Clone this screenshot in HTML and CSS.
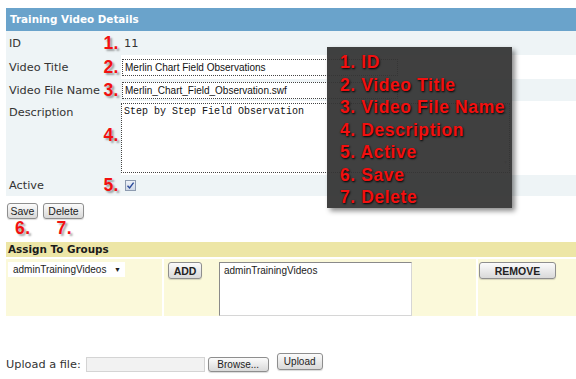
FILE: index.html
```html
<!DOCTYPE html>
<html lang="en">
<head>
  <meta charset="UTF-8">
  <title>Training Video Details</title>
  <link rel="stylesheet" href="styles.css">
</head>
<body>
  <div class="page">

    <div class="details">
      <div class="title-bar">Training Video Details</div>

      <div class="row row-id">
        <div class="label">ID <span class="num">1.</span></div>
        <div class="value value-text">11</div>
      </div>

      <div class="row row-title alt">
        <div class="label">Video Title <span class="num">2.</span></div>
        <div class="value"><div class="field field-title">Merlin Chart Field Observations</div></div>
      </div>

      <div class="row row-file">
        <div class="label">Video File Name <span class="num">3.</span></div>
        <div class="value"><div class="field field-file">Merlin_Chart_Field_Observation.swf</div></div>
      </div>

      <div class="row row-desc alt">
        <div class="label label-top">Description <span class="num">4.</span></div>
        <div class="value">
          <div class="field field-desc">Step by Step Field Observation
            <span class="scroll-up">&#9650;</span>
            <span class="scroll-down">&#9660;</span>
          </div>
        </div>
      </div>

      <div class="row row-active">
        <div class="label">Active <span class="num">5.</span></div>
        <div class="value">
          <span class="checkbox">
            <svg width="9" height="9" viewBox="0 0 9 9"><path d="M1.5 4.8 L3.6 7 L7.6 1.6" fill="none" stroke="#2a4a9a" stroke-width="1.4"/></svg>
          </span>
        </div>
      </div>
    </div>

    <div class="actions">
      <button class="btn btn-save">Save</button>
      <button class="btn btn-delete">Delete</button>
    </div>
    <div class="action-nums">
      <span class="num num-save">6.</span>
      <span class="num num-delete">7.</span>
    </div>

    <div class="groups">
      <div class="groups-head">Assign To Groups</div>
      <div class="groups-row">
        <div class="cell cell-select">
          <div class="select">adminTrainingVideos <span class="arrow">&#9660;</span></div>
        </div>
        <div class="cell cell-mid">
          <button class="btn btn-bold btn-add">ADD</button>
          <div class="listbox">adminTrainingVideos</div>
        </div>
        <div class="cell cell-remove">
          <button class="btn btn-bold btn-remove">REMOVE</button>
        </div>
      </div>
    </div>

    <div class="upload">
      <span class="upload-label">Upload a file:</span>
      <span class="file-input"></span>
      <button class="btn btn-browse">Browse...</button>
      <button class="btn btn-upload">Upload</button>
    </div>

    <div class="callout">
      <div>1. ID</div>
      <div>2. Video Title</div>
      <div>3. Video File Name</div>
      <div>4. Description</div>
      <div>5. Active</div>
      <div>6. Save</div>
      <div>7. Delete</div>
    </div>

  </div>
</body>
</html>
```

FILE: styles.css
```css
:root {
  --blue: #6aa3cb;
  --light: #eef4f6;
  --khaki: #ede6a6;
  --cream: #fbf9da;
  --red: #f21010;
  --text: #333;
}

body {
  margin: 0;
  font-family: 'DejaVu Sans', Verdana, sans-serif;
  font-size: 11.3px;
  color: var(--text);
  background: #fff;
  overflow: hidden;
}

.page {
  position: relative;
  padding: 8px 0 0 6px;
  height: 371px;
}

/* details table */

.title-bar {
  height: 23px;
  line-height: 23px;
  padding-left: 4px;
  background-color: var(--blue);
  color: #fff;
  font-weight: bold;
  font-size: 10.4px;
}

.row {
  display: grid;
  grid-template-columns: 115px 1fr;
}

.row-id { height: 24px; }
.row-title { height: 24px; }
.row-file { height: 22px; }
.row-desc { height: 74px; }
.row-active { height: 21px; }

.label {
  display: flex;
  align-items: center;
  justify-content: space-between;
  padding: 0 2px 0 3px;
  background-color: var(--light);
}

.label-top {
  align-items: flex-start;
  padding-top: 5px;
}

.label-top .num {
  margin-top: 19px;
}

.value {
  display: flex;
  align-items: center;
  background-color: var(--light);
}

.row.alt .value {
  background-color: #fff;
}

.value-text {
  padding-left: 3px;
}

.num {
  font-family: 'Liberation Sans', Arial, sans-serif;
  font-weight: bold;
  font-size: 17.5px;
  letter-spacing: 0.5px;
  color: var(--red);
  text-shadow: 2px 2px 2px rgba(0, 0, 0, 0.35);
}

.field {
  box-sizing: border-box;
  border: 1px dotted #444;
  background: #fff;
  font-family: 'Liberation Sans', Arial, sans-serif;
  font-size: 10px;
  color: #111;
  padding-left: 2px;
}

.field-title,
.field-file {
  width: 276px;
  height: 17px;
  line-height: 15px;
  margin-left: 1px;
}

.field-desc {
  position: relative;
  width: 389px;
  height: 70px;
  font-family: 'Liberation Mono', 'Courier New', monospace;
  font-size: 10px;
  padding-top: 2px;
  line-height: 12px;
}

.scroll-up,
.scroll-down {
  position: absolute;
  right: 2px;
  font-size: 5px;
  color: #bbb;
}

.scroll-up { top: 3px; }
.scroll-down { bottom: 3px; }

.checkbox {
  display: flex;
  align-items: center;
  justify-content: center;
  width: 9px;
  height: 9px;
  margin-left: 4px;
  border: 1px solid #8d9bb0;
  background: linear-gradient(#eef2f8, #cfd8e6);
}

/* buttons */

.btn {
  box-sizing: border-box;
  padding: 0;
  border: 1px solid #8e8e8e;
  border-radius: 3px;
  background: linear-gradient(#fbfbfb, #d9d9d9);
  font-family: 'Liberation Sans', Arial, sans-serif;
  font-size: 10.5px;
  color: #222;
  box-shadow: 0 1px 1px rgba(0, 0, 0, 0.15);
}

.btn-bold {
  font-weight: bold;
  font-size: 10.5px;
}

.actions {
  display: flex;
  gap: 5px;
  margin: 7px 0 0 1px;
}

.btn-save { width: 31px; height: 16px; }
.btn-delete { width: 41px; height: 16px; }

.action-nums {
  display: flex;
  height: 20px;
  padding-left: 9px;
}

.action-nums .num {
  line-height: 19px;
}

.num-delete {
  margin-left: 26px;
}

/* groups */

.groups {
  margin-top: 3px;
}

.groups-head {
  height: 15px;
  line-height: 15px;
  padding-left: 2px;
  background-color: var(--khaki);
  color: #1a1a1a;
  font-weight: bold;
  font-size: 10.4px;
}

.groups-row {
  display: grid;
  grid-template-columns: 156px 312px 1fr;
  gap: 2px;
  margin-top: 2px;
  height: 57px;
}

.cell {
  background-color: var(--cream);
  padding-top: 3px;
}

.cell-select {
  padding-left: 2px;
}

.select {
  display: flex;
  justify-content: space-between;
  align-items: center;
  box-sizing: border-box;
  width: 117px;
  height: 15px;
  padding: 0 4px 0 5px;
  background: #fff;
  font-family: 'Liberation Sans', Arial, sans-serif;
  font-size: 10px;
  color: #222;
}

.arrow {
  font-size: 7px;
}

.cell-mid {
  display: flex;
  align-items: flex-start;
}

.btn-add {
  width: 34px;
  height: 17px;
  margin-left: 4px;
}

.listbox {
  box-sizing: border-box;
  width: 193px;
  height: 54px;
  margin-left: 17px;
  padding: 2px 4px;
  background: #fff;
  border: 1px solid #d6d6d6;
  border-top-color: #8a8a8a;
  border-left-color: #8a8a8a;
  font-family: 'Liberation Sans', Arial, sans-serif;
  font-size: 10px;
  color: #222;
}

.cell-remove {
  padding-left: 1px;
}

.btn-remove {
  width: 77px;
  height: 17px;
}

/* upload */

.upload {
  display: flex;
  align-items: flex-start;
  margin-top: 37px;
}

.upload-label {
  margin-top: 4px;
  line-height: 15px;
}

.file-input {
  box-sizing: border-box;
  width: 119px;
  height: 15px;
  margin: 4px 0 0 5px;
  background: #f2f2f2;
  border: 1px solid #d4d4d4;
}

.btn-browse {
  width: 61px;
  height: 15px;
  margin: 4px 0 0 3px;
  font-size: 10px;
}

.btn-upload {
  width: 46px;
  height: 17px;
  margin-left: 8px;
  font-size: 10px;
}

/* annotation callout */

.callout {
  position: absolute;
  left: 327px;
  top: 47px;
  box-sizing: border-box;
  width: 185px;
  height: 161px;
  padding: 4px 0 0 13px;
  background: rgba(52, 52, 52, 0.94);
  box-shadow: 3px 3px 5px rgba(0, 0, 0, 0.45);
  font-family: 'Liberation Sans', Arial, sans-serif;
  font-weight: bold;
  font-size: 17.5px;
  letter-spacing: 0.6px;
  line-height: 22.5px;
  color: var(--red);
  text-shadow: 1px 1px 2px #000;
  white-space: nowrap;
}
```
